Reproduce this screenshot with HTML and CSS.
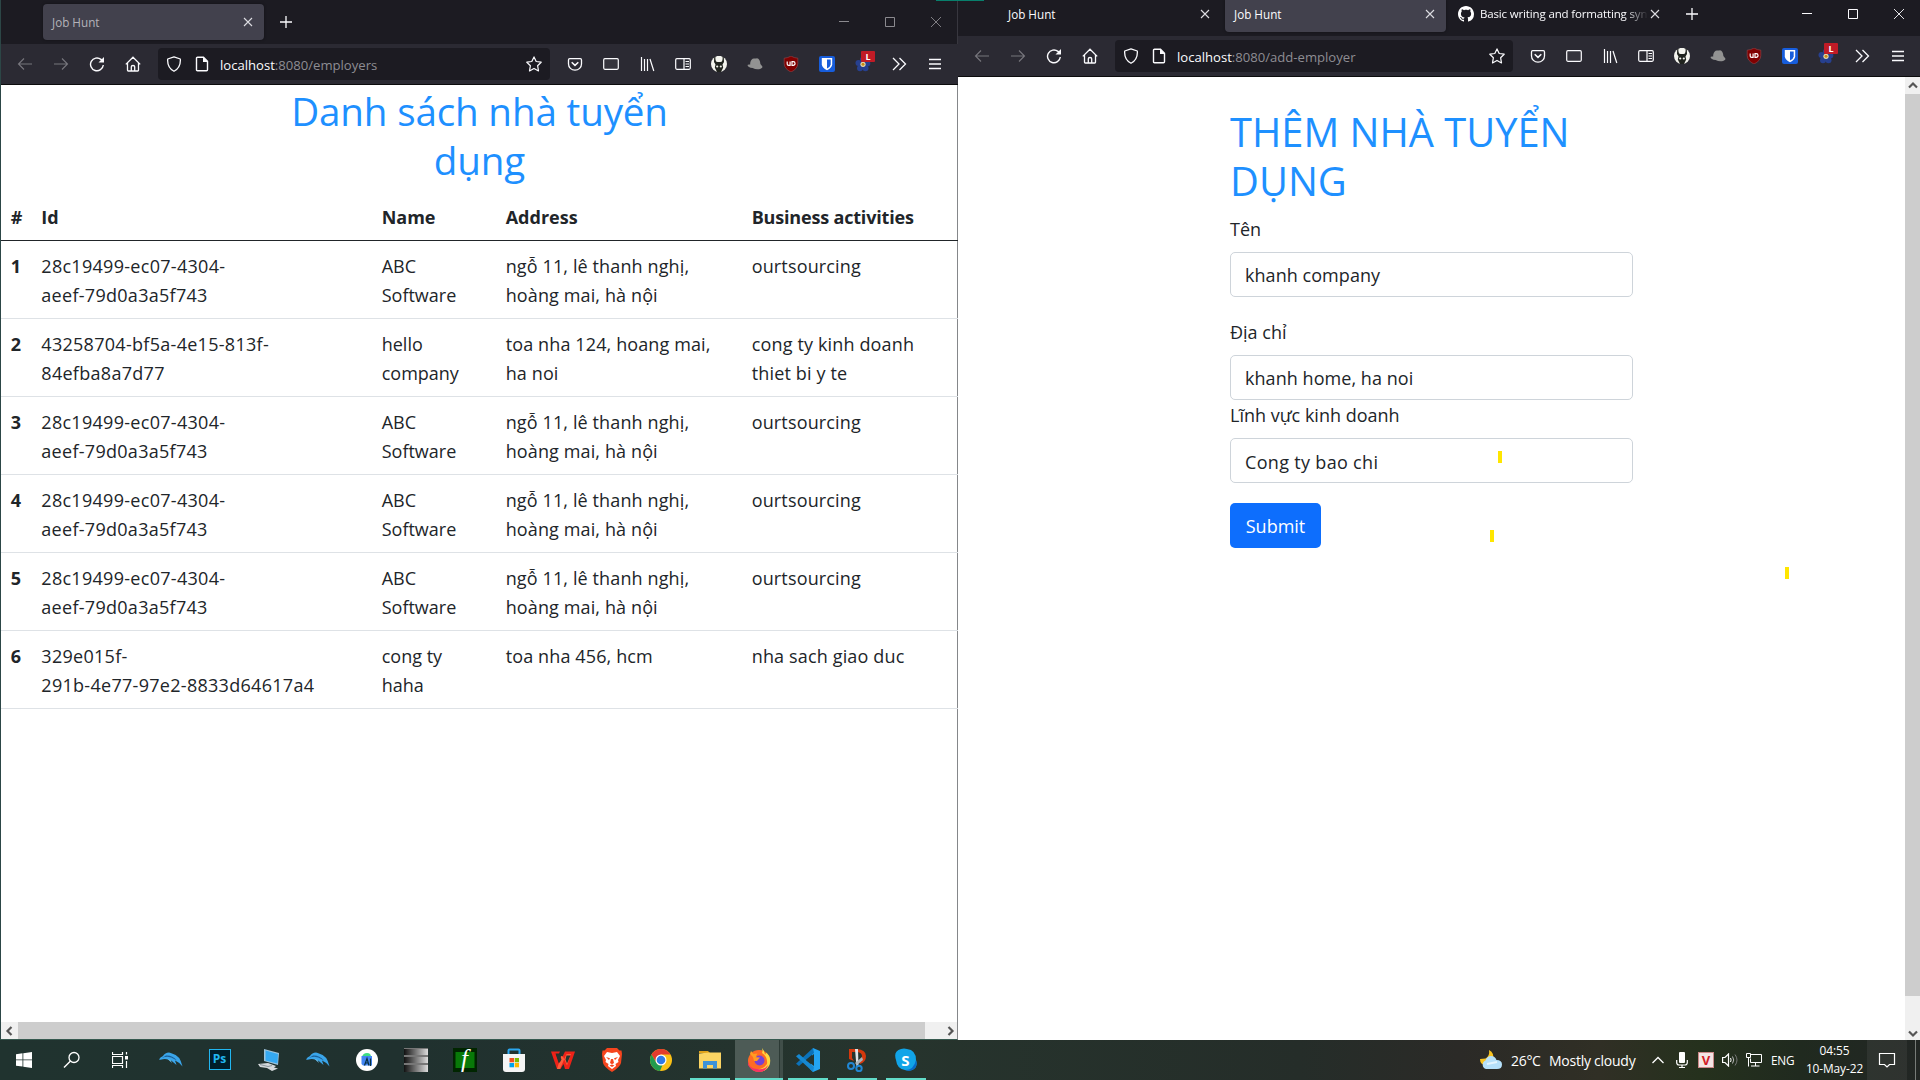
FILE: index.html
```html
<!DOCTYPE html>
<html lang="vi">
<head>
<meta charset="utf-8">
<title>Job Hunt</title>
<link rel="stylesheet" href="styles.css">
</head>
<body>
<svg class="defs" aria-hidden="true">
  <symbol id="close" viewBox="0 0 12 12"><path d="M2 2l8 8M10 2l-8 8" fill="none" stroke="currentColor" stroke-width="1.1"/></symbol>
  <symbol id="plus" viewBox="0 0 14 14"><path d="M7 1v12M1 7h12" fill="none" stroke="currentColor" stroke-width="1.3"/></symbol>
  <symbol id="win-min" viewBox="0 0 12 12"><path d="M1 5.5h10" stroke="currentColor"/></symbol>
  <symbol id="win-max" viewBox="0 0 12 12"><path d="M1.5 1.5h9v9h-9z" fill="none" stroke="currentColor"/></symbol>
  <symbol id="win-close" viewBox="0 0 12 12"><path d="M1 1l10 10M11 1L1 11" stroke="currentColor" stroke-width=".9"/></symbol>
  <symbol id="back" viewBox="0 0 16 16"><path d="M15 8H1.5M7 2.500L1.500 8 7 13.500" fill="none" stroke="currentColor" stroke-width="1.1"/></symbol>
  <symbol id="forward" viewBox="0 0 16 16"><path d="M1 8h13.500M9 2.500L14.500 8 9 13.500" fill="none" stroke="currentColor" stroke-width="1.1"/></symbol>
  <symbol id="reload" viewBox="0 0 16 16"><path d="M14.300 9A6.400 6.400 0 1 1 12 3.400L14 5.200" fill="none" stroke="currentColor" stroke-width="1.400"/><path d="M15 1v5.500H9.500z" fill="currentColor"/></symbol>
  <symbol id="home" viewBox="0 0 16 16"><path d="M.800 8.400L8 1.200l7.200 7.200M2.500 7v7.200q0 .800.800.800h9.400q.800 0 .800-.800V7M6.300 15v-4.200q0-1.300 1.700-1.300t1.700 1.300V15" fill="none" stroke="currentColor" stroke-width="1.300"/></symbol>
  <symbol id="shield" viewBox="0 0 16 16"><path d="M8 .800L14.300 3q.700 8.500-6.300 12.300Q1 11.500 1.700 3z" fill="none" stroke="currentColor" stroke-width="1.300" stroke-linejoin="round"/></symbol>
  <symbol id="doc" viewBox="0 0 16 16"><path d="M3.500 1.200h6l4 4v8.600q0 1-1 1h-9q-1 0-1-1V2.200q0-1 1-1z" fill="none" stroke="currentColor" stroke-width="1.400"/><path d="M9 1v5h5z" fill="currentColor"/></symbol>
  <symbol id="star" viewBox="0 0 16 16"><path d="M8 .900l2.200 4.600 5 .700-3.600 3.500.900 5.200L8 12.400l-4.500 2.500.900-5.200L.800 6.200l5-.700z" fill="none" stroke="currentColor" stroke-width="1.200" stroke-linejoin="round"/></symbol>
  <symbol id="pocket" viewBox="0 0 16 16"><path d="M2.700 2.700h10.600q1.200 0 1.200 1.200v4a6.500 6.300 0 0 1-13 0v-4q0-1.200 1.200-1.200z" fill="none" stroke="currentColor" stroke-width="1.300"/><path d="M4.700 6.200L8 9.400l3.300-3.200" fill="none" stroke="currentColor" stroke-width="1.500"/></symbol>
  <symbol id="tabview" viewBox="0 0 16 16"><rect x=".700" y="2.700" width="14.600" height="10.600" rx="1.200" fill="#35343d" stroke="currentColor" stroke-width="1.200"/></symbol>
  <symbol id="library" viewBox="0 0 16 16"><path d="M2.500 1v14M5.500 3v12M8.500 3v12M11 3l3.800 12" fill="none" stroke="currentColor" stroke-width="1.200"/></symbol>
  <symbol id="sidebar" viewBox="0 0 16 16"><rect x=".700" y="2.700" width="14.600" height="10.600" rx="1.200" fill="none" stroke="currentColor" stroke-width="1.200"/><path d="M9 3v10M10.500 5.500h3.500M10.500 8h3.500M10.500 10.500h3.500" fill="none" stroke="currentColor" stroke-width="1.200"/></symbol>
  <symbol id="mask" viewBox="0 0 16 16"><circle cx="8" cy="8" r="8" fill="#f4f4ee"/><path d="M4.500 0q-.500 3 .500 5.500L6.500 6h3l1.500-.5Q12 3 11.500 0l1.300 1.500L13 6l-1.500 2.500.700 3L11 14l-1 2H6l-1-2-1.200-2.500.700-3L3 6l.200-4.500z" fill="#20231e"/><path d="M6 0h4l-.500 4.500h-3z" fill="#f4f4ee"/><circle cx="6.200" cy="10.500" r="1.100" fill="#f4f4ee"/><circle cx="9.800" cy="10.500" r="1.100" fill="#f4f4ee"/></symbol>
  <symbol id="hat" viewBox="0 0 16 16"><path d="M3.200 7Q4 2.500 7 2.500q1.500.300 3-.200 3 .500 3.400 5.700l2 2.500q.500 1.600-1.800 2.200-4 1.300-8-.700Q1 11.500.500 9q.300-.800 2.700-.500z" fill="#929292"/></symbol>
  <symbol id="ublock" viewBox="0 0 16 16"><path d="M8 0q3 2 6.800 2.200v5.300Q14.600 13 8 16 1.400 13 1.200 7.500V2.200Q5 2 8 0z" fill="#800000" stroke="#98464b" stroke-width=".600"/><path d="M4.200 5.500v2.500q0 1.300 1.400 1.300h1.500V5.500M9 5.600h1.200a1.800 1.800 0 0 1 0 3.700H9z" fill="none" stroke="#fff" stroke-width="1.200"/></symbol>
  <symbol id="bitwarden" viewBox="0 0 16 16"><rect width="16" height="16" rx="2" fill="#175ddc"/><path d="M2.800 2h10.400v6.500Q13 11.500 8 14.300 3 11.500 2.800 8.500z" fill="#fff"/><path d="M8 3.500h3.700v5Q11.500 10.500 8 12.500z" fill="#175ddc"/></symbol>
  <symbol id="flower" viewBox="0 0 16 16"><g fill="#27408f"><circle cx="8" cy="3.800" r="3"/><circle cx="12.300" cy="7.500" r="3"/><circle cx="10.500" cy="12.300" r="3"/><circle cx="5" cy="12.300" r="3"/><circle cx="3.500" cy="7" r="3"/></g><circle cx="8" cy="8.300" r="2.600" fill="#e6dcb0"/><circle cx="8" cy="8.300" r="1.500" fill="#c98a14"/></symbol>
  <symbol id="more" viewBox="0 0 16 16"><path d="M2 2l6 6-6 6M8.500 2l6 6-6 6" fill="none" stroke="currentColor" stroke-width="1.300"/></symbol>
  <symbol id="menu" viewBox="0 0 16 16"><path d="M2 3.500h12M2 8h12M2 12.500h12" stroke="currentColor" stroke-width="1.300"/></symbol>
  <symbol id="chev" viewBox="0 0 12 12"><path d="M2 8.500L6 4.500l4 4" fill="none" stroke="currentColor" stroke-width="2.200"/></symbol>
  <symbol id="dolphin" viewBox="0 0 24 24"><path d="M0 11.500Q1 9 4 8 6 4.500 10 4.500q2 .300 3 1Q21 7 23.500 18.500 20 14 16 12.500l1.500 4.500-5-4.200Q8 10.500 4 11.200 2 12 0 11.500z" fill="#3aa5ea"/><path d="M3 10q7-3 13 1.500l2 1Q13 7 7 7.500z" fill="#1b5d96"/><path d="M8 10.500l5 4.500-1.500-3z" fill="#6cc5f5"/></symbol>
</svg>

<main class="desktop">
  <section class="window window-left">
    <header class="tabs">
      <div class="tab active"><span class="tab-title">Job Hunt</span><svg class="i12"><use href="#close"/></svg></div>
      <svg class="new-tab"><use href="#plus"/></svg>
      <div class="controls"><span><svg class="i12"><use href="#win-min"/></svg></span><span><svg class="i12"><use href="#win-max"/></svg></span><span><svg class="i12"><use href="#win-close"/></svg></span></div>
    </header>
    <nav class="toolbar">
      <span class="tool dim"><svg><use href="#back"/></svg></span><span class="tool dim"><svg><use href="#forward"/></svg></span><span class="tool"><svg><use href="#reload"/></svg></span><span class="tool"><svg><use href="#home"/></svg></span>
      <div class="urlbar"><svg><use href="#shield"/></svg><svg><use href="#doc"/></svg><span class="url"><b>localhost</b>:8080/employers</span><svg><use href="#star"/></svg></div>
      <span class="tool"><svg><use href="#pocket"/></svg></span><span class="tool"><svg><use href="#tabview"/></svg></span><span class="tool"><svg><use href="#library"/></svg></span><span class="tool"><svg><use href="#sidebar"/></svg></span><span class="tool"><svg><use href="#mask"/></svg></span><span class="tool"><svg><use href="#hat"/></svg></span><span class="tool"><svg><use href="#ublock"/></svg></span><span class="tool"><svg><use href="#bitwarden"/></svg></span><span class="tool"><svg><use href="#flower"/></svg><i class="badge">L</i></span><span class="tool"><svg><use href="#more"/></svg></span><span class="tool"><svg><use href="#menu"/></svg></span>
    </nav>
    <div class="page list-page">
      <h1 class="heading list-heading">Danh sách nhà tuyển<br>dụng</h1>
      <table class="employers">
        <colgroup><col class="c-num"><col class="c-id"><col class="c-name"><col class="c-address"><col class="c-business"></colgroup>
        <thead><tr><th>#</th><th>Id</th><th>Name</th><th>Address</th><th>Business activities</th></tr></thead>
        <tbody>
          <tr><th>1</th><td>28c19499-ec07-4304-<br>aeef-79d0a3a5f743</td><td>ABC<br>Software</td><td>ngỗ 11, lê thanh nghị,<br>hoàng mai, hà nội</td><td>ourtsourcing</td></tr>
          <tr><th>2</th><td>43258704-bf5a-4e15-813f-<br>84efba8a7d77</td><td>hello<br>company</td><td>toa nha 124, hoang mai,<br>ha noi</td><td>cong ty kinh doanh<br>thiet bi y te</td></tr>
          <tr><th>3</th><td>28c19499-ec07-4304-<br>aeef-79d0a3a5f743</td><td>ABC<br>Software</td><td>ngỗ 11, lê thanh nghị,<br>hoàng mai, hà nội</td><td>ourtsourcing</td></tr>
          <tr><th>4</th><td>28c19499-ec07-4304-<br>aeef-79d0a3a5f743</td><td>ABC<br>Software</td><td>ngỗ 11, lê thanh nghị,<br>hoàng mai, hà nội</td><td>ourtsourcing</td></tr>
          <tr><th>5</th><td>28c19499-ec07-4304-<br>aeef-79d0a3a5f743</td><td>ABC<br>Software</td><td>ngỗ 11, lê thanh nghị,<br>hoàng mai, hà nội</td><td>ourtsourcing</td></tr>
          <tr><th>6</th><td>329e015f-<br>291b-4e77-97e2-8833d64617a4</td><td>cong ty<br>haha</td><td>toa nha 456, hcm</td><td>nha sach giao duc</td></tr>
        </tbody>
      </table>
    </div>
    <div class="hscroll"><svg class="i12 left"><use href="#chev"/></svg><div class="thumb"></div><svg class="i12 right"><use href="#chev"/></svg></div>
  </section>

  <section class="window window-right">
    <header class="tabs">
      <div class="tab"><span class="tab-title">Job Hunt</span><svg class="i12"><use href="#close"/></svg></div>
      <div class="tab active"><span class="tab-title">Job Hunt</span><svg class="i12"><use href="#close"/></svg></div>
      <div class="tab"><svg class="github" viewBox="0 0 16 16"><path fill="#fff" d="M8 0C3.580 0 0 3.580 0 8c0 3.540 2.290 6.530 5.470 7.590.4.070.55-.17.55-.38 0-.19-.01-.82-.01-1.490-2.010.37-2.530-.49-2.690-.94-.09-.23-.48-.94-.82-1.130-.28-.15-.68-.52-.01-.53.63-.01 1.080.58 1.230.82.72 1.210 1.870.87 2.330.66.07-.52.28-.87.51-1.070-1.780-.2-3.640-.89-3.640-3.950 0-.87.31-1.590.82-2.150-.08-.2-.36-1.020.08-2.120 0 0 .67-.21 2.200.82.64-.18 1.320-.27 2-.27s1.360.09 2 .27c1.530-1.040 2.200-.82 2.200-.82.44 1.100.16 1.920.08 2.120.51.56.82 1.270.82 2.150 0 3.070-1.870 3.750-3.650 3.950.29.25.54.73.54 1.480 0 1.070-.01 1.930-.01 2.200 0 .21.15.46.55.38A8.010 8.010 0 0 0 16 8c0-4.420-3.580-8-8-8z"/></svg><span class="tab-title faded">Basic writing and formatting syn</span><svg class="i12"><use href="#close"/></svg></div>
      <svg class="new-tab"><use href="#plus"/></svg>
      <div class="controls"><span><svg class="i12"><use href="#win-min"/></svg></span><span><svg class="i12"><use href="#win-max"/></svg></span><span><svg class="i12"><use href="#win-close"/></svg></span></div>
    </header>
    <nav class="toolbar">
      <span class="tool dim"><svg><use href="#back"/></svg></span><span class="tool dim"><svg><use href="#forward"/></svg></span><span class="tool"><svg><use href="#reload"/></svg></span><span class="tool"><svg><use href="#home"/></svg></span>
      <div class="urlbar"><svg><use href="#shield"/></svg><svg><use href="#doc"/></svg><span class="url"><b>localhost</b>:8080/add-employer</span><svg><use href="#star"/></svg></div>
      <span class="tool"><svg><use href="#pocket"/></svg></span><span class="tool"><svg><use href="#tabview"/></svg></span><span class="tool"><svg><use href="#library"/></svg></span><span class="tool"><svg><use href="#sidebar"/></svg></span><span class="tool"><svg><use href="#mask"/></svg></span><span class="tool"><svg><use href="#hat"/></svg></span><span class="tool"><svg><use href="#ublock"/></svg></span><span class="tool"><svg><use href="#bitwarden"/></svg></span><span class="tool"><svg><use href="#flower"/></svg><i class="badge">L</i></span><span class="tool"><svg><use href="#more"/></svg></span><span class="tool"><svg><use href="#menu"/></svg></span>
    </nav>
    <div class="form-view">
      <form class="page form-page">
        <h1 class="heading form-heading">THÊM NHÀ TUYỂN<br>DỤNG</h1>
        <div class="field field-name"><label for="name">Tên</label><input id="name" value="khanh company"></div>
        <div class="field field-address"><label for="address">Địa chỉ</label><input id="address" value="khanh home, ha noi"></div>
        <div class="field field-business"><label for="business">Lĩnh vực kinh doanh</label><input id="business" value="Cong ty bao chi"></div>
        <button class="submit" type="button">Submit</button>
      </form>
      <div class="vscroll"><svg class="i12 up"><use href="#chev"/></svg><div class="thumb"></div><svg class="i12 down"><use href="#chev"/></svg></div>
    </div>
    <i class="mark mark-a"></i><i class="mark mark-b"></i><i class="mark mark-c"></i>
  </section>
  <i class="top-strip"></i>
</main>

<footer class="taskbar">
  <div class="system">
    <span><svg width="16" height="16" viewBox="0 0 16 16"><path d="M0 2.200l6.500-.9v6.200H0zM7.300 1.200L16 0v7.500H7.300zM0 8.300h6.500v6.300L0 13.700zM7.300 8.300H16V16l-8.700-1.200z" fill="#fff"/></svg></span>
    <span><svg width="18" height="18" viewBox="0 0 18 18"><circle cx="11" cy="6.500" r="5" fill="none" stroke="#fff" stroke-width="1.300"/><path d="M7.500 10L1 16.500" stroke="#fff" stroke-width="1.500"/></svg></span>
    <span><svg width="16" height="16" viewBox="0 0 16 16"><path d="M.500 0v2.500h10V0M.500 16v-2.500h10V16M.500 4.500h10v7H.500zM14.500 0v2.500M14.500 9v7" fill="none" stroke="#fff" stroke-width="1.200"/><path d="M13 4h3v3.500h-3z" fill="#fff"/></svg></span>
  </div>
  <div class="apps">
    <span class="app"><svg><use href="#dolphin"/></svg></span>
    <span class="app"><b class="ps">Ps</b></span>
    <span class="app"><svg viewBox="0 0 24 24"><path d="M7 1l15 4-1 12-14-4z" fill="#9ec4dc"/><path d="M8.500 2.500L21 6l-.500 9.500-12-3z" fill="#35a9f2"/><path d="M1 16l10-1 8 3-2 1.500 4 1-6 2.500-5-3-7-1z" fill="#d5d9dc"/><path d="M3 16.500l8 2 4-1" stroke="#8b969c" fill="none"/></svg></span>
    <span class="app"><svg><use href="#dolphin"/></svg></span>
    <span class="app"><svg viewBox="0 0 24 24"><circle cx="12" cy="12" r="11" fill="#fff"/><path d="M7 9q1-4 5-4t4 4z" fill="#3ddc84"/><path d="M6.500 8H17v9.500H8L6.500 16z" fill="#4285f4"/><path d="M9.500 17.500l2.500-7 2 7M15.500 10.500V18M10.500 15h3" stroke="#073042" stroke-width="1.200" fill="none"/></svg></span>
    <span class="app"><b class="grad"></b></span>
    <span class="app"><b class="fx">f</b></span>
    <span class="app"><svg viewBox="0 0 24 24"><path d="M6.500 6V2.500q0-1 1-1h9q1 0 1 1V6" fill="none" stroke="#2ba7ef" stroke-width="2"/><path d="M1 6h22v15q0 3-3 3H4q-3 0-3-3z" fill="#f5f5f5"/><path d="M7.500 10H12v4.300H7.500z" fill="#f25022"/><path d="M12.700 10H17v4.300h-4.300z" fill="#7fba00"/><path d="M7.500 15H12v4.300H7.500z" fill="#00a4ef"/><path d="M12.700 15H17v4.300h-4.300z" fill="#ffb900"/></svg></span>
    <span class="app"><svg viewBox="0 0 24 24"><path d="M0 3.500h9l-1 2H4.500L8 16l6-12.500h10L18 21h-4l-1.500-5L9.500 21H6z" fill="#ee2218"/><path d="M10 8l2 .500 4 9L20 6h-4.500L9 21H6z" fill="#ff5b3a"/><path d="M15.500 7.500h4l-3.500 8-1.500-4zM5 6.500L8.500 15l2-3.500-2-5z" fill="#263530"/></svg></span>
    <span class="app"><svg viewBox="0 0 24 24"><path d="M7 0h10l2.500 2.500h2L22 6l-1 9q-1 4-9 9-8-5-9-9L2 6l.500-3.500h2z" fill="#f6451e"/><path d="M7 4l5 1 5-1 3 4-2 4 .500 2-3 2 .500 2-4 3-4-3 .500-2-3-2 .500-2-2-4z" fill="#fff"/><path d="M6 9l4 1.200L9 12zM18 9l-4 1.200 1 1.800zM11 11h2l1 4-2 1.300-2-1.300zM9.500 17.500l2.500-1 2.500 1-2.500 1.500z" fill="#f6451e"/></svg></span>
    <span class="app"><svg viewBox="0 0 24 24"><circle cx="12" cy="12" r="11" fill="#fbc116"/><path d="M2.500 6.500A11 11 0 0 1 21.500 6.500H12L7 14z" fill="#e33b2e"/><path d="M2.500 6.500l5 8.500q2 3 6 2L11 23A11 11 0 0 1 2.500 6.500z" fill="#229b4e"/><circle cx="12" cy="12" r="5.500" fill="#fff"/><circle cx="12" cy="12" r="4.300" fill="#3079e8"/></svg></span>
    <span class="app running"><svg viewBox="0 0 24 24"><path d="M1 3h9l2 2H1z" fill="#e0a21a"/><path d="M1 5.500l10-1H23v16H1z" fill="#fbd463"/><path d="M5 13h14v7.500h-4V17H9v3.500H5z" fill="#3d92d8"/></svg></span>
    <span class="app running current"><svg viewBox="0 0 24 24"><circle cx="12" cy="13" r="11" fill="#ff6b23"/><path d="M15 0q1 3 0 5 6 4 5 11Q16 22 8 21q9 6 14.500-4Q25 9 19 4.500q0 2-1 2Q17 2 15 0z" fill="#ffd83e"/><path d="M3 6l1-3 2.500 3 4-.5L9 8l3 1-4 2z" fill="#ff9d21"/><path d="M1 13q1 8 9 8 8 1 11-4-2 7-9 7T1 17z" fill="#f43267"/><circle cx="12.500" cy="12.500" r="5" fill="#7542d4"/><path d="M6 9l7 .5-3 3.500H7z" fill="#ff9b22"/></svg></span>
    <span class="app running"><svg viewBox="0 0 24 24"><path d="M17 0l7 3v18l-7 3-3-3z" fill="#23a4f2"/><path d="M18 5L3 18l-3-2.200L17 0z" fill="#0b72b9"/><path d="M18 19L3 6 0 8.200 17 24z" fill="#1688d1"/><path d="M18 6v12l-8-6z" fill="#243530"/></svg></span>
    <span class="app running"><svg viewBox="0 0 24 24"><path d="M4 1h8q9 1 9 7t-6 8l-2-3q4-2 4-5t-4-4H7v6l2 3-5-2z" fill="#d5380d"/><path d="M10 1l3 0 .5 18h-2z" fill="#dfe4e8"/><path d="M17 9l-7 6 2 2 6-5z" fill="#aab4bc"/><circle cx="6" cy="18" r="3" fill="none" stroke="#2187d4" stroke-width="2"/><circle cx="14" cy="20.500" r="2.700" fill="none" stroke="#2187d4" stroke-width="2"/></svg></span>
    <span class="app running"><svg viewBox="0 0 24 24"><path d="M7 1q3-1 6 0 9 1 9 11 2 6-2 9t-9 1Q3 21 2 12-1 3 7 1z" fill="#11a4e8"/><path d="M22 12q2 6-2 9t-9 1q9 0 11-10z" fill="#0869c7"/></svg><b class="skype">S</b></span>
  </div>
  <div class="tray">
    <svg class="weather" viewBox="0 0 22 20"><path d="M9 0q1 6-3.500 8.500L0 9q0 6 6 6l7-4Q15 3 9 0z" fill="#f8c321"/><path d="M6 19a4.500 4.500 0 0 1-.5-8.500Q7 6 11 6t5.500 4Q22 10 22 14.500T17 19z" fill="#b5e0fa"/><path d="M7 14l10-2" stroke="#e4f5fe" stroke-width="2"/></svg>
    <span class="temp">26°C</span><span class="cloud">Mostly cloudy</span>
    <svg class="up-chev" viewBox="0 0 12 8"><path d="M.500 7L6 1.500 11.500 7" fill="none" stroke="#fff" stroke-width="1.300"/></svg>
    <svg class="mic" viewBox="0 0 12 16"><rect x="3" width="6" height="11" rx="1" fill="#fff"/><path d="M.700 8v2.500q0 2.500 2.500 2.500h5.600q2.500 0 2.500-2.500V8M6 13v3M3 15.500h6" fill="none" stroke="#fff" stroke-width="1.200"/></svg>
    <b class="vkey">V</b>
    <svg class="sound" viewBox="0 0 16 14"><path d="M.600 4.500H3l3.500-3.500v12L3 9.500H.600z" fill="none" stroke="#fff" stroke-width="1.200"/><path d="M8.500 5q1.200 2 0 4" fill="none" stroke="#fff"/><path d="M10.500 3.500q2.500 3.500 0 7" fill="none" stroke="#bbb"/><path d="M13 1.500q4 5.500 0 11" fill="none" stroke="#777"/></svg>
    <svg class="net" viewBox="0 0 16 14"><path d="M5 1.500h10.500v8H4.500V5.500M9.500 9.500v3.500M5 13h8.500M.500.500h4v4h-4zM2.500 5v8.500" fill="none" stroke="#fff"/></svg>
    <span class="lang">ENG</span>
    <div class="clock"><span>04:55</span><span>10-May-22</span></div>
    <div class="notify"><svg width="18" height="17" viewBox="0 0 18 17"><path d="M1.500 1.500h15v11h-5L9 15l-2.500-2.500h-5z" fill="none" stroke="#fff" stroke-width="1.200"/></svg></div>
    <i class="peek"></i>
  </div>
</footer>
</body>
</html>
```
FILE: styles.css
```css
* { box-sizing: border-box; }
body { margin: 0; width: 1920px; height: 1080px; overflow: hidden; display: flex; flex-direction: column; font-family: "Open Sans", "Noto Sans", sans-serif; background: #fff; }
.defs { position: absolute; width: 0; height: 0; }
svg { display: block; flex: none; }
.i12 { width: 12px; height: 12px; }

.desktop { position: relative; display: flex; height: 1040px; flex: none; }
.window { display: flex; flex-direction: column; background: #fff; }
.window-left { width: 958px; border-left: 1px solid #2c4646; border-right: 1px solid #85878a; border-bottom: 1px solid #36594f; }
.window-right { width: 962px; position: relative; }
.top-strip { position: absolute; left: 936px; top: 0; width: 48px; height: 1px; background: #087f6c; }

/* Browser chrome */
.tabs { display: flex; height: 44px; flex: none; background: #1c1b22; color: #fbfbfe; padding: 4px 0 4px 42px; gap: 4px; margin-right: -1px; border-right: 1px solid #38373f; }
.window-right .tabs { height: 36px; padding: 0 0 4px 42px; margin: 0; border: 0; }
.tab { width: 221px; display: flex; align-items: center; padding: 0 10px 0 8px; border-radius: 4px; font-size: 11.7px; flex: none; }
.window-right .tab { height: 32px; padding-bottom: 4px; border-radius: 0 0 4px 4px; }
.tab.active { background: #42414d; box-shadow: 0 0 3px rgba(0,0,0,.4); padding-left: 9px; }
.window-left .tab-title { color: #b4b3ba; }
.tab-title { flex: 1; white-space: nowrap; line-height: 18px; }
.tab-title.faded { font-size: 11.500px; letter-spacing: -.15px; width: 169px; flex: none; margin-right: -2px; -webkit-mask-image: linear-gradient(to right, #000 146px, transparent 168px); mask-image: linear-gradient(to right, #000 146px, transparent 168px); }
.tab svg.i12 { color: #dddde2; margin-left: auto; }
.github { width: 16px; height: 16px; margin-right: 6px; }
.new-tab { width: 14px; height: 14px; margin: 11px 0 0 10.500px; }
.window-right .new-tab { margin: 7px 0 0 10px; }
.controls { margin-left: auto; display: flex; height: 36px; padding-top: 12px; }
.window-right .controls { padding-top: 8px; }
.window-left .controls { color: #8b8a8f; }
.controls span { width: 46px; display: flex; justify-content: center; }
.controls span:last-child { margin-right: -2px; }
.toolbar { display: flex; align-items: center; height: 41px; flex: none; background: #2b2a33; border-bottom: 1px solid #0c0c0d; padding: 0 5px 0 6px; color: #fbfbfe; margin-right: -1px; }
.window-right .toolbar { margin: 0; padding-right: 4px; }
.tool { position: relative; width: 36px; display: flex; justify-content: center; flex: none; }
.tool svg, .urlbar svg { width: 16px; height: 16px; }
.dim { color: #77767d; }
.badge { position: absolute; left: 16px; top: -5px; width: 14px; height: 11px; border-radius: 1px; background: #c01b26; color: #fff; font: bold 9px/11px "Open Sans", sans-serif; text-align: center; }
.urlbar { flex: 1; height: 32px; margin: 0 7px; display: flex; align-items: center; border-radius: 4px; background: #1c1b22; padding: 0 8px; }
.urlbar svg + svg { margin-left: 12px; }
.url { flex: 1; margin-left: 10px; font-size: 13.1px; color: #8e8d93; padding-top: 1px; }
.url b { font-weight: 400; color: #fbfbfe; }

/* Page content */
.page { font-size: 18px; line-height: 29px; color: #212529; }
.heading { margin: 0; font-weight: 400; font-size: 38.6px; line-height: 49px; color: #1e90ff; white-space: nowrap; }
.list-page { flex: 1; }
.list-heading { text-align: center; padding: 2px 0 0 1px; letter-spacing: -.15px; }
.employers { border-collapse: collapse; table-layout: fixed; width: 957px; margin-top: 8px; line-height: 29px; }
.c-num { width: 30px; } .c-id { width: 341px; } .c-name { width: 124px; } .c-address { width: 246px; } .c-business { width: 216px; }
.employers th, .employers td { text-align: left; vertical-align: top; padding: 11px 0 8px 9.700px; border-bottom: 1px solid #dee2e6; white-space: nowrap; }
.employers th:nth-child(2), .employers td:nth-child(2) { padding-left: 10.300px; }
.employers td:nth-child(2) { letter-spacing: .29px; }
.employers td:nth-child(4) { letter-spacing: .12px; }
.employers td:nth-child(5) { letter-spacing: .15px; }
.employers thead th { height: 47px; border-color: #212529; padding-top: 10px; padding-bottom: 7px; }
.employers thead th:last-child { letter-spacing: -.18px; }
.hscroll { display: flex; align-items: center; height: 17px; flex: none; background: #f0f0f0; color: #555; padding: 0 0 0 2px; }
.hscroll .thumb { width: 907px; height: 17px; background: #cdcdcd; margin-left: 3px; }
.left { transform: rotate(-90deg); } .right { transform: rotate(90deg); margin-left: auto; } .down { transform: rotate(180deg); }

.form-view { display: flex; flex: 1; }
.form-page { flex: 1; padding: 30px 272px 0; }
.form-page .field { display: flex; flex-direction: column; gap: 8px; }
.form-heading { margin-bottom: 10px; font-size: 39.800px; }
.form-page input { width: 403px; height: 45px; border: 1px solid #ced4da; border-radius: 5px; padding: 1px 14px 0; font: inherit; color: inherit; background: #fff; letter-spacing: .05px; }
.form-page .field-business input { letter-spacing: .32px; padding-top: 3px; }
.field-name { margin-bottom: 21px; }
.field-address { margin-bottom: 1px; }
.field-business { margin-bottom: 20px; }
.submit { display: block; width: 91px; height: 45px; border: 0; border-radius: 5px; background: #0d6efd; color: #fff; font: inherit; padding: 2px 0 0; }
.vscroll { width: 15px; background: #f0f0f0; color: #555; display: flex; flex-direction: column; align-items: center; padding: 2px 0 0; }
.vscroll .thumb { width: 15px; height: 902px; margin-top: 3px; background: #cdcdcd; }
.vscroll .down { margin-top: auto; }
.mark { position: absolute; width: 4px; height: 12px; background: #ffe600; }
.mark-a { left: 540px; top: 451px; } .mark-b { left: 532px; top: 530px; } .mark-c { left: 827px; top: 567px; }

/* Taskbar */
.taskbar { height: 40px; flex: none; display: flex; color: #fff; background: linear-gradient(90deg, #20332f 0, #20312f 400px, #26342d 900px, #252d29 1300px, #2b2a27 1460px, #302f25 1600px, #25311d 1700px, #202a1f 1800px, #222624 1920px); }
.system { display: flex; width: 146px; }
.system span { width: 48px; display: flex; align-items: center; justify-content: center; }
.apps { display: flex; }
.app { position: relative; width: 49px; display: flex; align-items: center; justify-content: center; }
.app svg { width: 24px; height: 24px; }
.running::after { content: ""; position: absolute; left: 5px; right: 4px; bottom: 0; height: 2px; background: #62dcc9; }
.current { background: linear-gradient(90deg, transparent 1px, #4d5b56 1px, #4d5b56 45px, #2c3a35 45px, #2c3a35 46px, #404e49 46px); }
.current::after { left: 1px; right: 0; }
.ps { width: 22px; height: 21px; border: 1px solid #22b6f0; background: #001e2b; color: #22b6f0; font-size: 12px; line-height: 18px; text-align: center; margin-top: -1px; }
.grad { width: 24px; height: 24px; background: linear-gradient(#777 0 1px, transparent 1px 7px, #777 7px 9px, transparent 9px 15px, #777 15px 17px, transparent 17px), linear-gradient(90deg, #111, #ddd); }
.fx { width: 24px; height: 24px; background: linear-gradient(90deg, #002600 2px, #087908 3px, #087908 21px, #002600 22px); border: solid #002600; border-width: 4px 0; color: #fff; font: italic 25px/14px "Liberation Serif", serif; text-align: center; }
.skype { position: absolute; font-size: 15px; line-height: 20px; }
.tray { margin-left: auto; display: flex; align-items: center; white-space: nowrap; }
.weather { width: 22px; height: 20px; margin-right: 9px; }
.temp { width: 38px; font-size: 14px; line-height: 20px; padding-top: 2px; letter-spacing: -.3px; }
.cloud { width: 103px; font-size: 14px; line-height: 20px; padding-top: 2px; letter-spacing: -.25px; }
.up-chev { width: 12px; height: 8px; margin-right: 12px; }
.mic { width: 12px; height: 16px; margin-right: 10px; }
.vkey { width: 16px; height: 16px; background: #f4e4e4; border: 1px solid #c88; color: #d11c26; font-size: 13px; line-height: 14px; text-align: center; margin-right: 8px; }
.sound { width: 16px; height: 14px; margin-right: 8px; }
.net { width: 16px; height: 14px; margin-right: 9px; }
.lang { width: 35px; font-size: 11.800px; line-height: 16px; letter-spacing: -.2px; }
.clock { width: 57px; display: flex; flex-direction: column; align-items: center; font-size: 11.900px; line-height: 18px; letter-spacing: -.1px; margin: -2px 4px 0 0; }
.notify { width: 40px; height: 40px; background: rgba(255,255,255,.06); display: flex; align-items: center; justify-content: center; }
.peek { width: 1px; height: 40px; background: #777b78; margin: 0 4px 0 8px; }
```
